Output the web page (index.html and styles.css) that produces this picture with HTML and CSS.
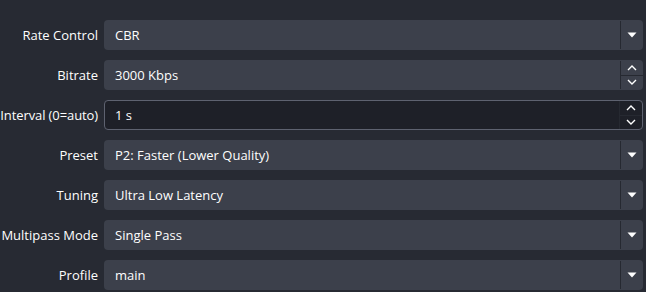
FILE: index.html
```html
<!DOCTYPE html>
<html>
<head>
<meta charset="utf-8">
<link rel="stylesheet" href="styles.css">
</head>
<body>
<div class="form">
  <div class="label">Rate Control</div>
  <div class="field combo"><span class="value">CBR</span><span class="btn"><svg width="10" height="6" viewBox="0 0 10 6"><path d="M0.5 0.5H9.5L5 5.5Z" fill="#fff"/></svg></span></div>

  <div class="label">Bitrate</div>
  <div class="field spin"><span class="value">3000 Kbps</span><span class="spinbtns"><span class="sb"><svg width="10" height="6" viewBox="0 0 10 6"><path d="M1 5L5 1L9 5" fill="none" stroke="#fff" stroke-width="1.4"/></svg></span><span class="sb"><svg width="10" height="6" viewBox="0 0 10 6"><path d="M1 1L5 5L9 1" fill="none" stroke="#fff" stroke-width="1.4"/></svg></span></span></div>

  <div class="label"><span class="tight">Interval (0=auto)</span></div>
  <div class="field spin focus"><span class="value">1 s</span><span class="spinbtns"><span class="sb"><svg width="10" height="6" viewBox="0 0 10 6"><path d="M1 5L5 1L9 5" fill="none" stroke="#fff" stroke-width="1.4"/></svg></span><span class="sb"><svg width="10" height="6" viewBox="0 0 10 6"><path d="M1 1L5 5L9 1" fill="none" stroke="#fff" stroke-width="1.4"/></svg></span></span></div>

  <div class="label">Preset</div>
  <div class="field combo"><span class="value">P2: Faster (Lower Quality)</span><span class="btn"><svg width="10" height="6" viewBox="0 0 10 6"><path d="M0.5 0.5H9.5L5 5.5Z" fill="#fff"/></svg></span></div>

  <div class="label">Tuning</div>
  <div class="field combo"><span class="value">Ultra Low Latency</span><span class="btn"><svg width="10" height="6" viewBox="0 0 10 6"><path d="M0.5 0.5H9.5L5 5.5Z" fill="#fff"/></svg></span></div>

  <div class="label">Multipass Mode</div>
  <div class="field combo"><span class="value">Single Pass</span><span class="btn"><svg width="10" height="6" viewBox="0 0 10 6"><path d="M0.5 0.5H9.5L5 5.5Z" fill="#fff"/></svg></span></div>

  <div class="label">Profile</div>
  <div class="field combo"><span class="value">main</span><span class="btn"><svg width="10" height="6" viewBox="0 0 10 6"><path d="M0.5 0.5H9.5L5 5.5Z" fill="#fff"/></svg></span></div>
</div>
</body>
</html>
```

FILE: styles.css
```css
html, body {
  margin: 0;
  padding: 0;
  background: #272a33;
  width: 646px;
  height: 292px;
  overflow: hidden;
}
.form {
  display: grid;
  grid-template-columns: 98px 539px;
  column-gap: 6px;
  row-gap: 10px;
  grid-auto-rows: 30px;
  padding-top: 20px;
  font-family: "Open Sans", "DejaVu Sans", sans-serif;
  font-size: 13px;
  color: #fefefe;
}
.label {
  display: flex;
  align-items: center;
  justify-content: flex-end;
  white-space: nowrap;
}
.tight {
  letter-spacing: -0.1px;
}
.field {
  display: flex;
  align-items: stretch;
  background: #3c404b;
  border-radius: 4px;
  box-sizing: border-box;
}
.field.focus {
  background: #1e2028;
  border: 1px solid #5e6270;
}
.value {
  flex: 1;
  display: flex;
  align-items: center;
  padding-left: 11px;
}
.field.focus .value {
  padding-left: 10px;
}
.btn {
  width: 22px;
  border-left: 1px solid #262931;
  margin: 1px 0;
  display: flex;
  align-items: center;
  justify-content: center;
}
.spinbtns {
  width: 22px;
  display: flex;
  flex-direction: column;
  border-left: 1px solid #262931;
  margin: 1px 0;
}
.field.focus .spinbtns {
  margin: 0;
}
.sb {
  flex: 1;
  display: flex;
  align-items: center;
  justify-content: center;
}
.sb + .sb {
  border-top: 1px solid #262931;
}
```
